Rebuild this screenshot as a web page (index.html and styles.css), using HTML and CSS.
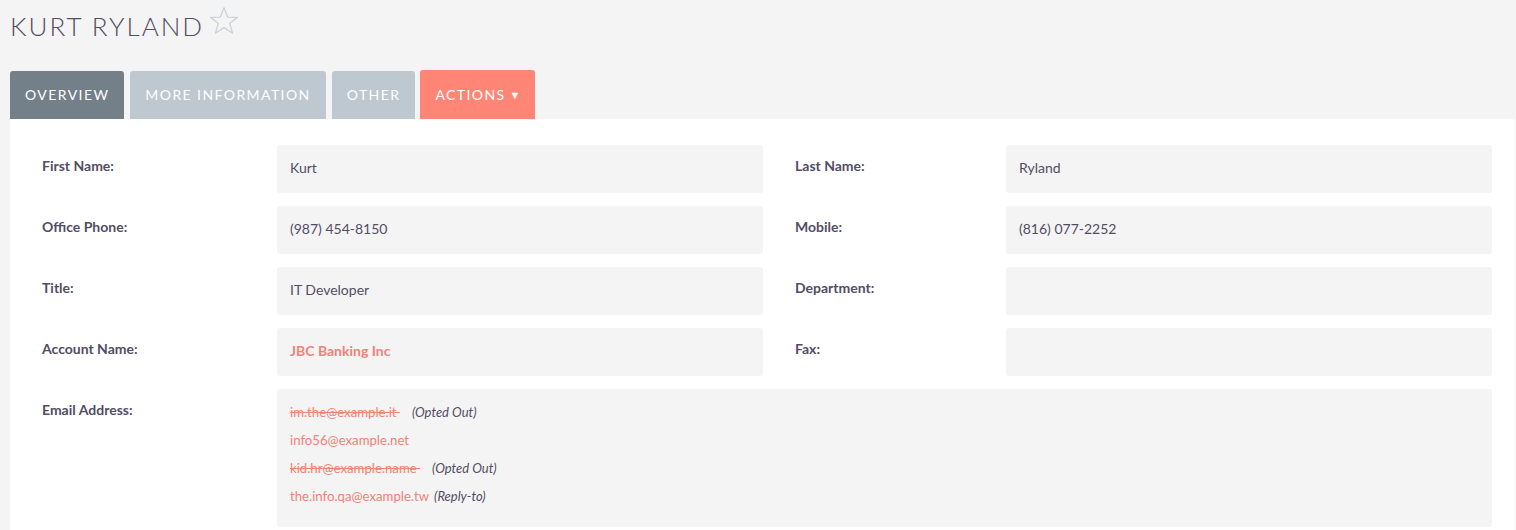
FILE: index.html
```html
<!DOCTYPE html>
<html lang="en">
<head>
    <meta charset="utf-8">
    <title>Kurt Ryland</title>
    <link rel="stylesheet" href="styles.css">
</head>
<body>
<main class="detail-page">
    <!-- start header -->
    <div class="module-title">
        <h2>KURT RYLAND</h2>
        <span class="favorite">
            <svg width="30" height="30" viewBox="0 0 28 28"><polygon points="14,1.5 17.4,10.3 26.6,10.6 19.4,16.4 22,25.5 14,20.2 6,25.5 8.6,16.4 1.4,10.6 10.6,10.3" fill="none" stroke="#c9d1d9" stroke-width="1.2" stroke-linejoin="round"/></svg>
        </span>
    </div>
    <!-- end header -->

    <ul class="nav-tabs">
        <li class="tab active"><a href="javascript:void(0)">Overview</a></li>
        <li class="tab"><a href="javascript:void(0)">More Information</a></li>
        <li class="tab"><a href="javascript:void(0)">Other</a></li>
        <li class="tab actions"><a href="javascript:void(0)">Actions<span class="caret">&#9660;</span></a></li>
    </ul>

    <div class="tab-content">
        <div class="detail-grid">
            <div class="label">First Name:</div>
            <div class="field">Kurt</div>
            <div class="label label-right">Last Name:</div>
            <div class="field">Ryland</div>

            <div class="label">Office Phone:</div>
            <div class="field">(987) 454-8150</div>
            <div class="label label-right">Mobile:</div>
            <div class="field">(816) 077-2252</div>

            <div class="label">Title:</div>
            <div class="field">IT Developer</div>
            <div class="label label-right">Department:</div>
            <div class="field"></div>

            <div class="label">Account Name:</div>
            <div class="field"><a class="link bold" href="javascript:void(0)">JBC Banking Inc</a></div>
            <div class="label label-right">Fax:</div>
            <div class="field"></div>

            <div class="label">Email Address:</div>
            <div class="field field-wide">
                <ul class="email-list">
                    <li><a class="link opted-out" href="javascript:void(0)">im.the@example.it </a><em class="note">(Opted Out)</em></li>
                    <li><a class="link" href="javascript:void(0)">info56@example.net</a></li>
                    <li><a class="link opted-out" href="javascript:void(0)">kid.hr@example.name </a><em class="note">(Opted Out)</em></li>
                    <li><a class="link" href="javascript:void(0)">the.info.qa@example.tw</a><em class="note reply">(Reply-to)</em></li>
                </ul>
            </div>
        </div>
    </div>
</main>
</body>
</html>
```

FILE: styles.css
```css
html, body { margin: 0; padding: 0; }
body { background: #f4f4f4; font-family: Lato, "Open Sans", "Liberation Sans", sans-serif; color: #534d64; height: 530px; overflow: hidden; }
a { text-decoration: none; }
ul { list-style: none; margin: 0; padding: 0; }

.detail-page { padding: 0 0 0 10px; }

.module-title { display: flex; align-items: flex-start; height: 70px; }
.module-title h2 { margin: 11px 0 0 0; font-size: 26px; font-weight: 300; letter-spacing: 2px; color: #534d64; line-height: 30px; }
.module-title .favorite { margin: 6px 0 0 5px; display: inline-block; }

.nav-tabs { display: flex; align-items: flex-end; gap: 6px; height: 49px; }
.nav-tabs .tab a { display: block; height: 48px; line-height: 48px; padding: 0 15px; font-size: 14px; letter-spacing: 1.42px; text-transform: uppercase; color: #fff; background: #bdc8d0; border-radius: 3px 3px 0 0; }
.nav-tabs .tab.active a { background: #738089; }
.nav-tabs .tab.actions a { background: #ff8576; height: 49px; line-height: 50px; }
.nav-tabs .tab.actions { margin-left: -1px; }
.nav-tabs .caret { font-size: 11px; letter-spacing: 0; margin-left: 4px; position: relative; top: -1px; }

.tab-content { background: #fff; margin-right: 1px; height: 411px; padding: 26px 0 0 32px; box-sizing: border-box; }

.detail-grid { display: grid; grid-template-columns: 235px 486px 243px 486px; grid-auto-rows: minmax(48px, auto); row-gap: 13px; }
.detail-grid .label { font-size: 14px; font-weight: 700; padding-top: 12px; color: #534d64; }
.detail-grid .label-right { padding-left: 32px; }
.detail-grid .field { background: #f4f4f4; border-radius: 3px; font-size: 14px; padding: 0 13px; line-height: 46px; color: #534d64; }
.detail-grid .field-wide { grid-column: 2 / 5; line-height: 28px; padding: 9px 13px 17px 13px; }

.link { color: #f08377; }
.link.bold { font-weight: 700; }
.email-list li { font-size: 13.2px; line-height: 28px; height: 28px; }
.opted-out { text-decoration: line-through; white-space: pre; }
.note { font-style: italic; color: #534d64; font-size: 13px; margin-left: 12px; }
.note.reply { margin-left: 5px; }
```
